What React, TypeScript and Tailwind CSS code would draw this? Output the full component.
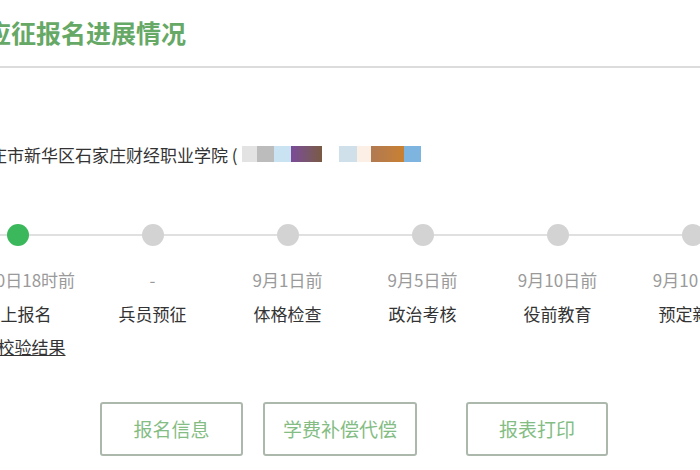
import React from 'react';

// ── Data ──────────────────────────────────────────────────────────────────────

const steps = [
  { date: '8月10日18时前', name: '网上报名', done: true, link: '学籍校验结果' },
  { date: '-', name: '兵员预征', done: false },
  { date: '9月1日前', name: '体格检查', done: false },
  { date: '9月5日前', name: '政治考核', done: false },
  { date: '9月10日前', name: '役前教育', done: false },
  { date: '9月10日前', name: '预定新兵', done: false },
];

// Mosaic (blurred personal info) blocks
const mosaic = [
  { w: 15, c: 'bg-[#e3e3e3]' },
  { w: 17, c: 'bg-[#bdbcbc]' },
  { w: 17, c: 'bg-[#c9e3f3]' },
  { w: 31, c: 'bg-gradient-to-r from-[#7b4a98] to-[#7a5a42]' },
  { w: 17, c: 'bg-white' },
  { w: 18, c: 'bg-[#d0e0ea]' },
  { w: 14, c: 'bg-[#fcefe6]' },
  { w: 33, c: 'bg-gradient-to-r from-[#b17a52] to-[#c9802e]' },
  { w: 17, c: 'bg-[#7db5e0]' },
];

const font = { fontFamily: '"Noto Sans CJK SC", "Noto Sans", sans-serif' };

// ── Component ─────────────────────────────────────────────────────────────────

export default function App() {
  return (
    <div className="w-[700px] h-[470px] overflow-hidden bg-white" style={font}>
      <div className="ml-[-50px] w-[810px]">
        {/* Title */}
        <div className="h-[66px] flex items-center pb-[2px] pl-[36px]">
          <h1 className="text-[25px] font-bold leading-none text-[#66a866]">应征报名进展情况</h1>
        </div>
        <div className="h-[2px] bg-[#dcdcdc]" />

        {/* Address */}
        <div className="mt-[75px] pl-[6px] flex items-center h-[24px]">
          <span className="text-[17px] leading-[24px] text-[#333]">石家庄市新华区石家庄财经职业学院 (</span>
          <div className="flex h-[16px] ml-[4px] -mt-[2px]">
            {mosaic.map((m, i) => (
              <div key={i} className={m.c} style={{ width: m.w }} />
            ))}
          </div>
        </div>

        {/* Timeline */}
        <div className="mt-[57px] flex items-start">
          {steps.map((s, i) => (
            <div key={i} className="w-[135px] flex flex-col items-center">
              <div className="w-full flex items-center h-[22px]">
                <div className="flex-1 h-[2px] bg-[#e0e0e0]" />
                <div
                  className={`w-[22px] h-[22px] rounded-full ${s.done ? 'bg-[#3cb85c]' : 'bg-[#d3d3d3]'}`}
                />
                <div className="flex-1 h-[2px] bg-[#e0e0e0]" />
              </div>
              <div className="mt-[22px] text-[17px] leading-[24px] text-[#9a9a9a] whitespace-nowrap">{s.date}</div>
              <div className="mt-[10px] text-[17px] leading-[24px] text-[#333] whitespace-nowrap">{s.name}</div>
              {s.link && (
                <a className="mt-[9px] mr-[6px] text-[17px] leading-[24px] text-[#333] underline whitespace-nowrap">
                  {s.link}
                </a>
              )}
            </div>
          ))}
        </div>

        {/* Buttons */}
        <div className="mt-[43px] flex pl-[150px]">
          <button className="w-[143px] h-[54px] border-2 border-[#adb8ad] rounded-[3px] text-[19px] text-[#84bd84]">
            报名信息
          </button>
          <button className="ml-[20px] w-[154px] h-[54px] border-2 border-[#adb8ad] rounded-[3px] text-[19px] text-[#84bd84]">
            学费补偿代偿
          </button>
          <button className="ml-[49px] w-[142px] h-[54px] border-2 border-[#adb8ad] rounded-[3px] text-[19px] text-[#84bd84]">
            报表打印
          </button>
        </div>
      </div>
    </div>
  );
}
